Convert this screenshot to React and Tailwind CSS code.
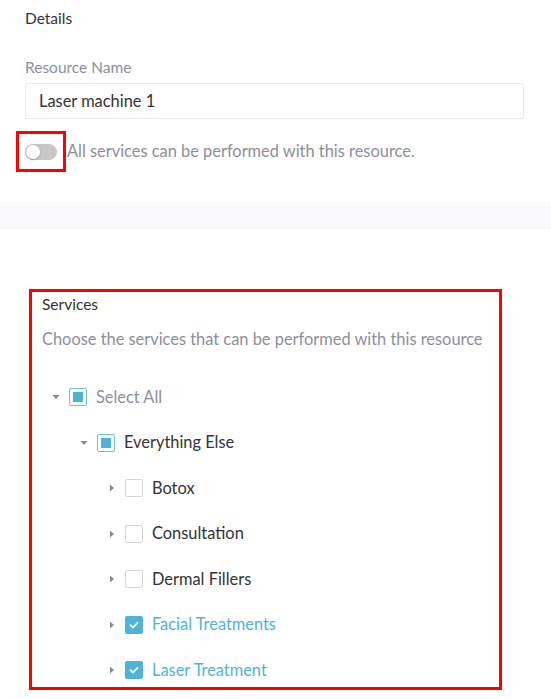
import React from 'react';

const services = [
  { name: 'Botox', checked: false },
  { name: 'Consultation', checked: false },
  { name: 'Dermal Fillers', checked: false },
  { name: 'Facial Treatments', checked: true },
  { name: 'Laser Treatment', checked: true },
];

function Caret({ open }) {
  // small filled triangle, pointing down when the node is open
  return (
    <svg width="8" height="8" viewBox="0 0 8 8" className="shrink-0">
      {open ? (
        <path d="M0.5 2 L7.5 2 L4 6 Z" fill="#8a8a96" />
      ) : (
        <path d="M2 0.5 L6 4 L2 7.5 Z" fill="#8a8a96" />
      )}
    </svg>
  );
}

function Box({ state }) {
  if (state === 'checked') {
    return (
      <span className="flex h-[18px] w-[18px] shrink-0 items-center justify-center rounded-[2px] bg-[#4fb3d9]">
        <svg width="12" height="12" viewBox="0 0 12 12">
          <path d="M2.5 6.2 L5 8.5 L9.5 3.8" fill="none" stroke="#fff" strokeWidth="1.8" strokeLinecap="round" strokeLinejoin="round" />
        </svg>
      </span>
    );
  }
  if (state === 'partial') {
    return (
      <span className="flex h-[18px] w-[18px] shrink-0 items-center justify-center rounded-[2px] border border-[#6cc0e0] bg-white">
        <span className="h-[10px] w-[10px] bg-[#4fb3d9]" />
      </span>
    );
  }
  return <span className="block h-[18px] w-[18px] shrink-0 rounded-[2px] border border-[#d5d5de] bg-white" />;
}

function Row({ indent, open, state, label, tone }) {
  return (
    <div className="flex h-[34px] items-center" style={{ paddingLeft: indent }}>
      <Caret open={open} />
      <span className="ml-[9px] flex">
        <Box state={state} />
      </span>
      <span className={`ml-[9px] text-[16.4px] ${tone}`}>{label}</span>
    </div>
  );
}

export default function App() {
  return (
    <div className="min-h-screen bg-white font-['Lato',sans-serif]">
      <div className="pl-[25px] pr-[27px] pt-[8px]">
        <h2 className="text-[15.5px] leading-[20px] text-[#333333]">Details</h2>
        <label className="mt-[29px] block text-[15.5px] leading-[20px] text-[#8e8e9a]">Resource Name</label>
        <div className="mt-[6px] flex h-[36px] items-center rounded-[2px] border border-[#ececf0] px-[13px] text-[16.4px] text-[#333333]">
          Laser machine 1
        </div>
        <div className="-ml-[9px] mt-[12px] flex items-center">
          <div className="flex h-[41px] w-[50px] items-center justify-center border-[3px] border-[#ff0000]">
            <span className="relative h-[16px] w-[32px] rounded-full bg-[#c8c8c8]">
              <span className="absolute left-[1px] top-[1px] h-[14px] w-[14px] rounded-full bg-white shadow-[0_1px_2px_rgba(0,0,0,0.25)]" />
            </span>
          </div>
          <span className="ml-[1px] text-[16.4px] text-[#8e8e9a]">All services can be performed with this resource.</span>
        </div>
      </div>

      <div className="mt-[30px] h-[27px] bg-[#f9f9fb]" />

      <div className="ml-[29px] mt-[60px] w-[473px] border-[3px] border-[#ff0000] pl-[10px]">
        <h3 className="pt-[2px] text-[15.5px] leading-[20px] text-[#333333]">Services</h3>
        <p className="mt-[15px] text-[16.4px] leading-[20px] text-[#8e8e9a]">
          Choose the services that can be performed with this resource
        </p>
        <div className="mt-[31px] flex flex-col gap-[11.5px]">
          <Row indent={10} open state="partial" label="Select All" tone="text-[#8e8e9a]" />
          <Row indent={38} open state="partial" label="Everything Else" tone="text-[#333333]" />
          {services.map((s) => (
            <Row
              key={s.name}
              indent={66}
              open={false}
              state={s.checked ? 'checked' : 'empty'}
              label={s.name}
              tone={s.checked ? 'text-[#4fb3d9]' : 'text-[#333333]'}
            />
          ))}
        </div>
      </div>
    </div>
  );
}
